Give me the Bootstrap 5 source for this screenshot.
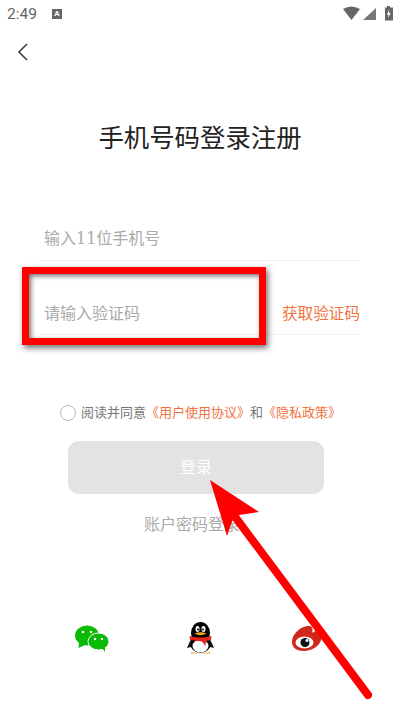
<!DOCTYPE html>
<html lang="zh-CN">
<head>
    <meta charset="UTF-8">
    <meta name="viewport" content="width=device-width, initial-scale=1.0">
    <title>手机号码登录注册</title>
    <link href="https://cdn.jsdelivr.net/npm/bootstrap@5.3.3/dist/css/bootstrap.min.css" rel="stylesheet">
    <style>
        html, body { height: 100%; }
        body { background: #fff; font-family: "DejaVu Serif", "Noto Sans CJK SC", serif; overflow: hidden; }
        .screen { width: 400px; height: 710px; position: relative; overflow: hidden; }
        .status-bar { height: 27px; padding: 0 7px; color: #666; font: 15.500px Roboto, sans-serif; }
        .status-a { width: 10px; height: 10px; background: #666; color: #fff; font-size: 8px; line-height: 10px; margin-left: 15px; font-weight: 700; }
        .back-row { height: 42px; padding: 16px 0 0 17px; }
        .page-title { font-size: 25.400px; font-weight: 400; color: #222; line-height: 36px; margin: 51px 0 0; }
        .login-form { padding: 0 40px; margin-top: 60px; }
        .field-row { height: 45px; border-bottom: 1px solid #f1f1f1; padding: 0 0 9px 4px; font-size: 16px; line-height: 24px; color: #aaa; }
        .field-row + .field-row { height: 74px; padding-bottom: 8px; }
        .get-code { color: #f0733f; font-size: 15.600px; }
        .agree-row { margin-top: 68px; height: 20px; padding-left: 60px; font-size: 13px; line-height: 20px; color: #777; }
        .agree-row a { color: #f0733f; text-decoration: none; }
        .radio-dot { width: 16px; height: 16px; border: 1px solid #bbb; border-radius: 50%; margin-right: 5px; }
        .login-btn { width: 256px; height: 53px; margin: 18px 0 0 68px; background: #e3e3e3; border: 0; border-radius: 11px; color: #fff; font-size: 16px; }
        .pass-link { margin: 19px 0 0 144px; font-size: 16px; line-height: 24px; color: #aaa; }
        .social-row { margin-top: 85px; padding-left: 75px; gap: 78px; }
        .mark-box { position: absolute; left: 22px; top: 267px; width: 244px; height: 78px; border: 7px solid #f00; box-shadow: 2px 3px 6px rgba(0,0,0,.55), inset 2px 2px 5px rgba(0,0,0,.55); }
        .mark-arrow { position: absolute; left: 0; top: 0; }
    </style>
</head>
<body>
    <div class="screen">
        <div class="status-bar d-flex align-items-center">
            <span>2:49</span>
            <span class="status-a d-flex justify-content-center">A</span>
            <svg class="ms-auto" width="50" height="15" viewBox="0 0 50 15">
                <path d="M0 3Q8.500-2 17 3L8.500 14Z" fill="#666"/>
                <path d="M20 14 33 2V14Z" fill="#777"/>
                <path d="M44 0H47V1.500H50V14.500H42V1.500H44Z" fill="#666"/>
                <path d="M46.500 3.500 43.800 8.500H45.500L45 12 47.800 7H46Z" fill="#fff"/>
            </svg>
        </div>
        <div class="back-row">
            <svg class="d-block" width="12" height="18" viewBox="0 0 12 18"><path d="M10 1 2 9l8 8" fill="none" stroke="#444" stroke-width="1.700"/></svg>
        </div>
        <h1 class="page-title text-center">手机号码登录注册</h1>
        <form class="login-form">
            <div class="field-row d-flex align-items-end">输入11位手机号</div>
            <div class="field-row d-flex align-items-end justify-content-between">
                <span>请输入验证码</span>
                <span class="get-code">获取验证码</span>
            </div>
        </form>
        <div class="agree-row d-flex align-items-center">
            <span class="radio-dot"></span>
            <span>阅读并同意<a href="#">《用户使用协议》</a>和<a href="#">《隐私政策》</a></span>
        </div>
        <button class="login-btn d-block" type="button">登录</button>
        <div class="pass-link">账户密码登录</div>

        <div class="social-row d-flex align-items-center">
            <svg width="34" height="27" viewBox="0 0 34 27">
                <ellipse cx="12" cy="10.500" rx="12" ry="10" fill="#09bb07"/>
                <path d="M4 17 3.500 23 10 20Z" fill="#09bb07"/>
                <ellipse cx="23.500" cy="16.500" rx="10.500" ry="8.500" fill="#09bb07" stroke="#fff"/>
                <path d="M27 23 30 27 30 22Z" fill="#09bb07"/>
                <circle cx="8" cy="7" r="1.300" fill="#fff"/><circle cx="16" cy="7" r="1.300" fill="#fff"/>
                <circle cx="20" cy="14" r="1.200" fill="#fff"/><circle cx="27" cy="14" r="1.200" fill="#fff"/>
            </svg>
            <svg width="27" height="32" viewBox="0 0 27 32">
                <ellipse cx="13.500" cy="11" rx="9.500" ry="11" fill="#000"/>
                <ellipse cx="13.500" cy="21" rx="10.500" ry="10" fill="#000"/>
                <path d="M3.500 18 0 26 4 25ZM23.500 18 27 26 23 25Z" fill="#111"/>
                <ellipse cx="13.500" cy="24" rx="8" ry="6.500" fill="#fff"/>
                <ellipse cx="10.500" cy="7" rx="2" ry="3" fill="#fff"/><ellipse cx="16.500" cy="7" rx="2" ry="3" fill="#fff"/>
                <circle cx="11" cy="7.500" r="1" fill="#000"/><circle cx="16" cy="7.500" r="1" fill="#000"/>
                <path d="M7.500 11.500Q13.500 9 19.500 11.500 13.500 15 7.500 11.500Z" fill="#f5a623"/>
                <path d="M2.500 14Q13.500 17 24.500 14L24 18 19 19 18.500 24 15 19.500 3 18Z" fill="#e1251b"/>
                <path d="M4 30 12 31.500H4ZM23 30 15 31.500H23Z" fill="#f5a623"/>
            </svg>
            <svg width="30" height="25" viewBox="0 0 30 25">
                <path d="M0 16C0 8 8 1 15 0 21-1 21 4 20 7 23 4 27 5 28 9 30 11 30 14 27 18 23 23 16 25 12 25 5 25 0 22 0 16Z" fill="#d0271d"/>
                <ellipse cx="12.500" cy="16.500" rx="9" ry="6" fill="#fff"/>
                <circle cx="13" cy="16.500" r="4.500" fill="#111"/>
                <circle cx="15" cy="14.500" r="1.500" fill="#fff"/>
            </svg>
        </div>

        <div class="mark-box"></div>
        <svg class="mark-arrow" width="400" height="710" viewBox="0 0 400 710">
            <path d="M210 480 259 512 239 515 233 519 227 536Z" fill="#f00"/>
            <path d="M233 514 368 695" fill="none" stroke="#f00" stroke-width="8" stroke-linecap="round"/>
        </svg>
    </div>
    <script src="https://cdn.jsdelivr.net/npm/bootstrap@5.3.3/dist/js/bootstrap.bundle.min.js"></script>
</body>
</html>
